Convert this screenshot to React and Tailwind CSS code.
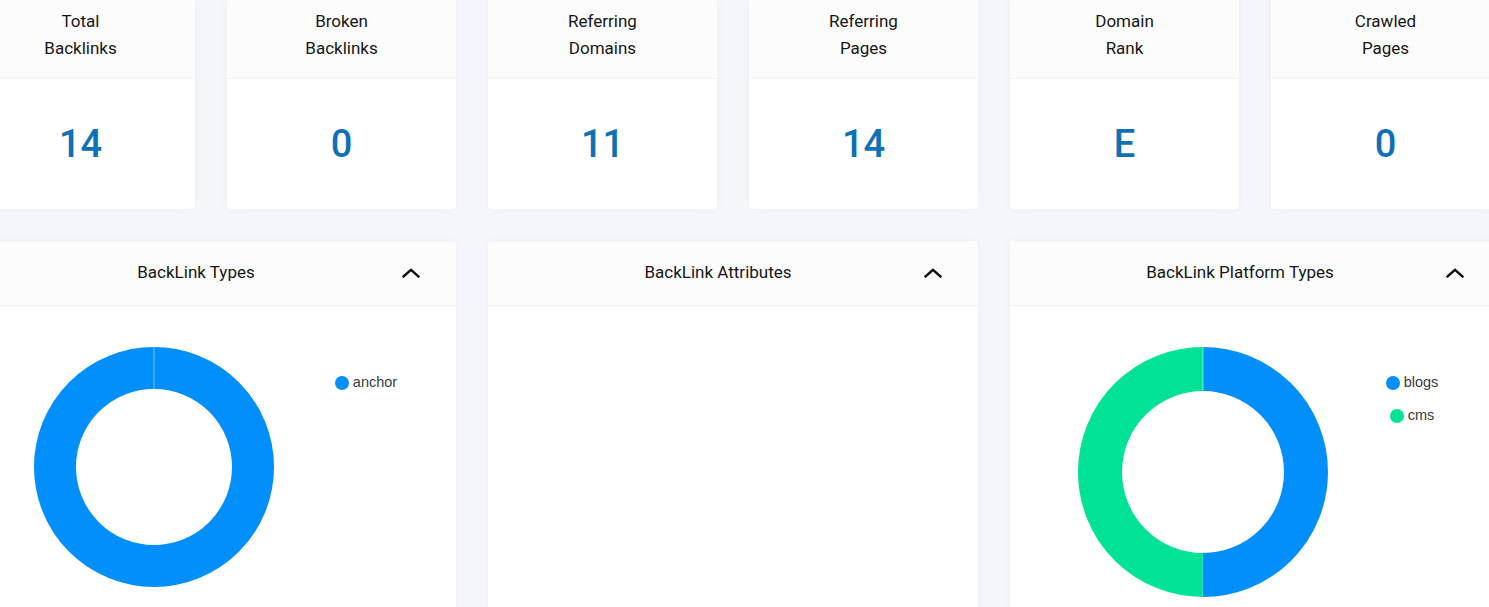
import React from 'react'

const STATS = [
  { top: 'Total', bottom: 'Backlinks', value: '14' },
  { top: 'Broken', bottom: 'Backlinks', value: '0' },
  { top: 'Referring', bottom: 'Domains', value: '11' },
  { top: 'Referring', bottom: 'Pages', value: '14' },
  { top: 'Domain', bottom: 'Rank', value: 'E' },
  { top: 'Crawled', bottom: 'Pages', value: '0' },
]

const BLUE = '#008ffb'
const GREEN = '#00e396'

const Chevron = () => (
  <svg width="18" height="10" viewBox="0 0 18 10" fill="none">
    <polyline points="1.5,8.5 9,1.8 16.5,8.5" stroke="#111" strokeWidth="2.4" strokeLinecap="square" />
  </svg>
)

// simple donut: slices are fractions of the full ring, drawn clockwise from 12 o'clock
const Donut = ({ size, thickness, slices }) => {
  const r = size / 2 - thickness / 2
  const c = 2 * Math.PI * r
  let offset = 0
  return (
    <svg width={size} height={size} viewBox={`0 0 ${size} ${size}`} className="shrink-0">
      <g transform={`rotate(-90 ${size / 2} ${size / 2})`}>
        {slices.map((s, i) => {
          const len = s.value * c
          const el = (
            <circle
              key={i}
              cx={size / 2}
              cy={size / 2}
              r={r}
              fill="none"
              stroke={s.color}
              strokeWidth={thickness}
              strokeDasharray={`${len} ${c - len}`}
              strokeDashoffset={-offset}
            />
          )
          offset += len
          return el
        })}
      </g>
      <line x1={size / 2} y1="0" x2={size / 2} y2={thickness} stroke="#ffffff" strokeOpacity="0.5" strokeWidth="1" />
    </svg>
  )
}

const Legend = ({ items }) => (
  <div className="ml-auto mr-[4px] mt-[26px] flex w-[172px] flex-col gap-[13px]">
    {items.map((it) => (
      <div key={it.label} className="flex h-5 items-center justify-center gap-[4px]">
        <span className="size-[14px] rounded-full" style={{ background: it.color }} />
        <span className="text-[14.5px] text-[#373d3f]" style={{ fontFamily: "'Liberation Sans', Arial, sans-serif" }}>
          {it.label}
        </span>
      </div>
    ))}
  </div>
)

const ChartCard = ({ title, children }) => (
  <div className="overflow-hidden rounded bg-white shadow-[0_0_12px_rgba(30,40,60,0.04)]">
    <div className="flex h-[65px] items-center border-b border-[#f1f1f1] bg-[#fcfcfc] px-[30px]">
      <div className="flex-1 text-center text-[17px] text-[#161616]">{title}</div>
      <div className="flex w-[30px] justify-center">
        <Chevron />
      </div>
    </div>
    <div className="flex h-[380px] items-start pl-[68px] pt-[41px]">{children}</div>
  </div>
)

export default function App() {
  return (
    <div className="h-[607px] w-[1489px] overflow-hidden bg-[#f5f7fa]" style={{ fontFamily: "Roboto, 'Noto Sans', sans-serif" }}>
      <div className="-ml-[34px] -mt-[8px] w-[1534px]">
        <div className="grid grid-cols-6 gap-8">
          {STATS.map((s, i) => (
            <div key={i} className="overflow-hidden rounded bg-white shadow-[0_0_12px_rgba(30,40,60,0.04)]">
              <div className="border-b border-[#f1f1f1] bg-[#fcfcfc] py-4 text-center text-[17px] leading-[27px] text-[#161616]">
                <div>{s.top}</div>
                <div>{s.bottom}</div>
              </div>
              <div className="flex h-[130px] items-center justify-center text-[38px] font-medium text-[#0e70b6]">
                {s.value}
              </div>
            </div>
          ))}
        </div>

        <div className="mt-8 grid grid-cols-3 gap-8">
          <ChartCard title="BackLink Types">
            <Donut size={240} thickness={42} slices={[{ value: 1, color: BLUE }]} />
            <Legend items={[{ label: 'anchor', color: BLUE }]} />
          </ChartCard>
          <ChartCard title="BackLink Attributes" />
          <ChartCard title="BackLink Platform Types">
            <Donut
              size={250}
              thickness={44}
              slices={[
                { value: 0.5, color: BLUE },
                { value: 0.5, color: GREEN },
              ]}
            />
            <Legend
              items={[
                { label: 'blogs', color: BLUE },
                { label: 'cms', color: GREEN },
              ]}
            />
          </ChartCard>
        </div>
      </div>
    </div>
  )
}
